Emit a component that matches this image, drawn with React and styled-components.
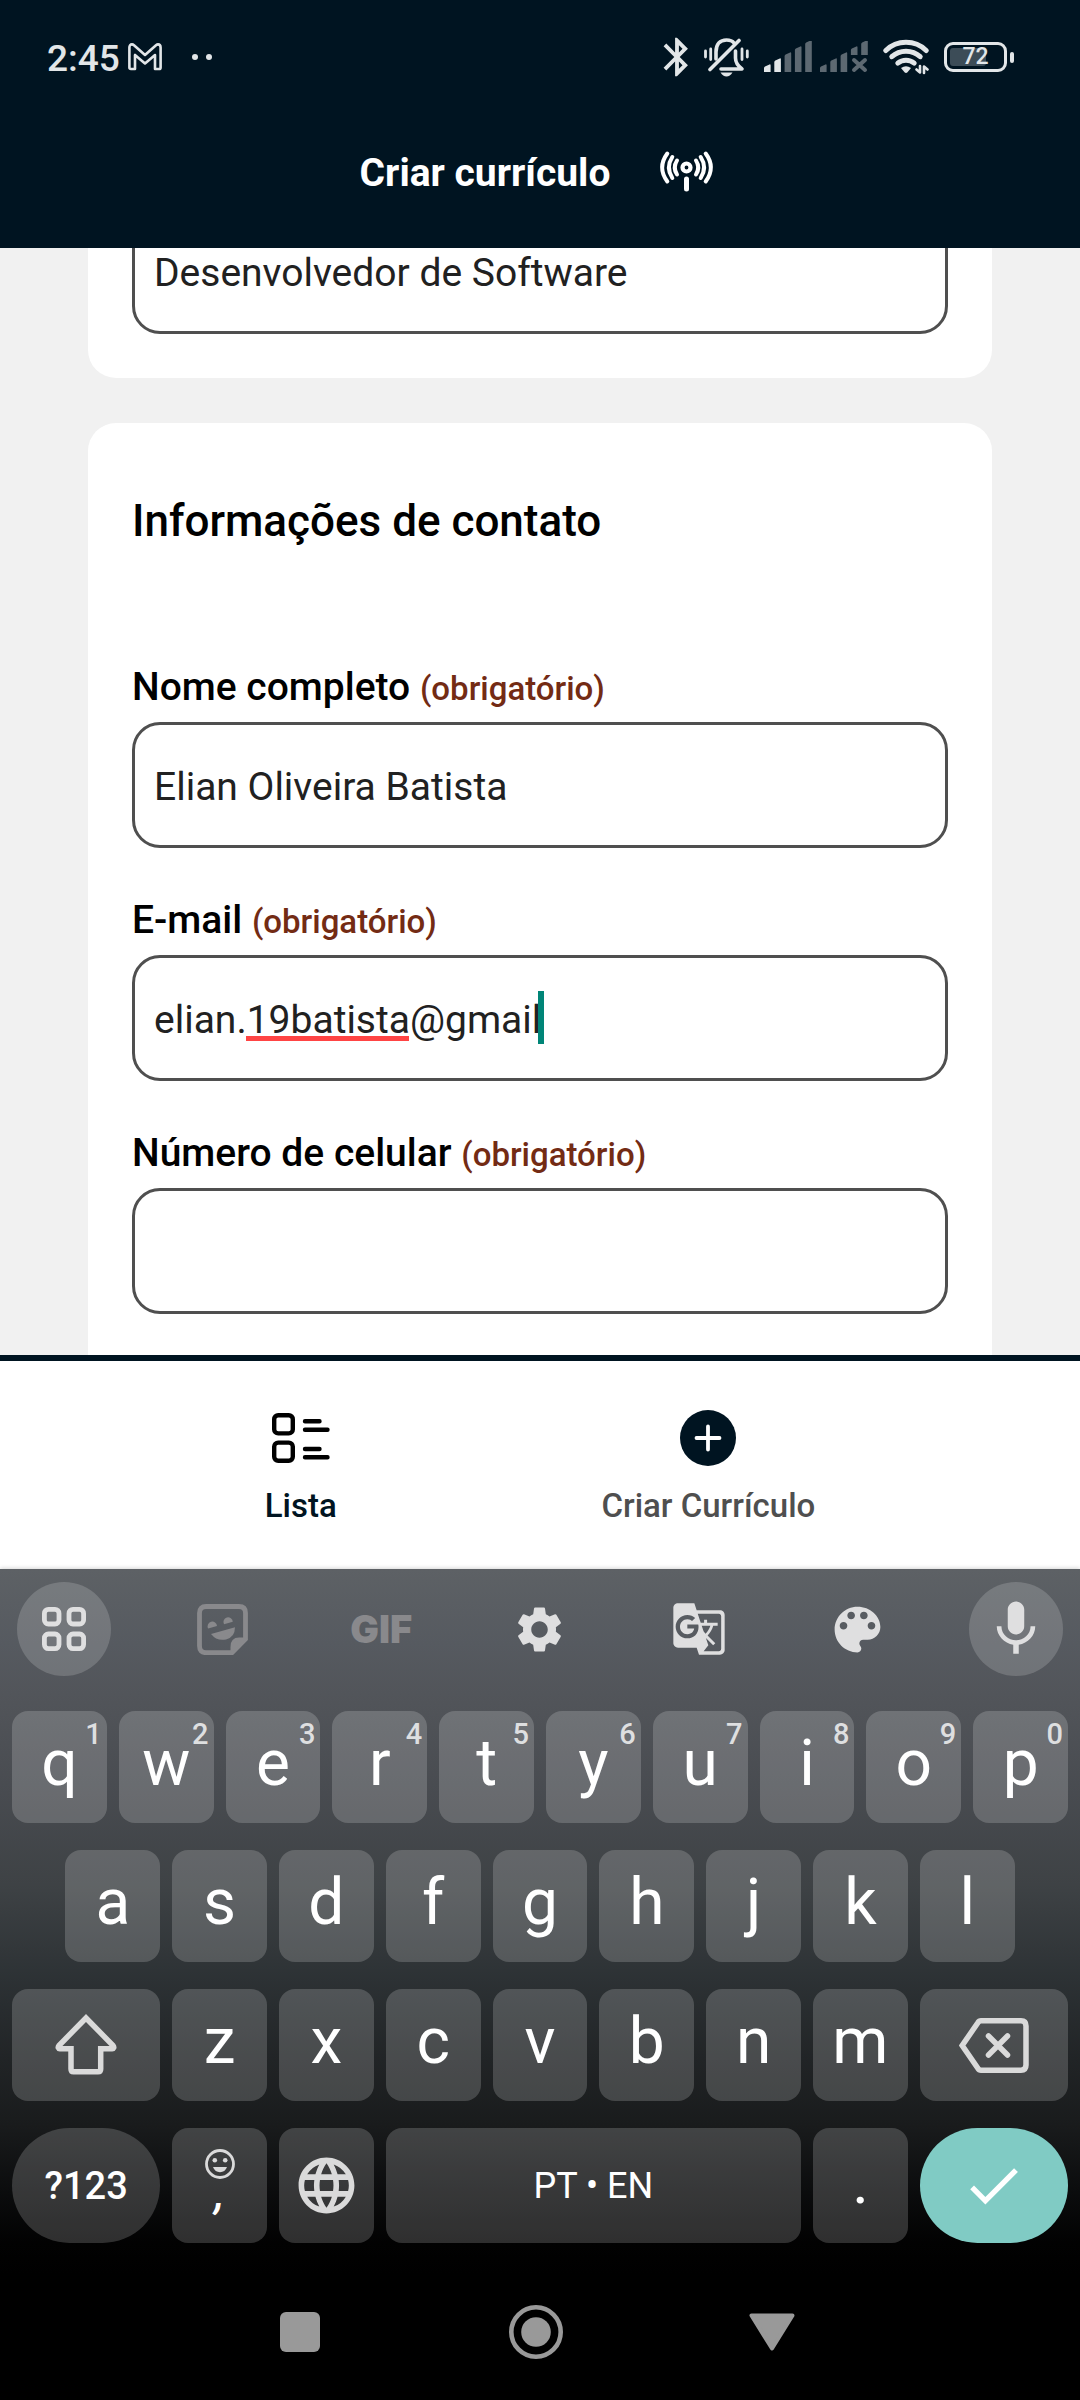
import React from 'react';
import styled, { createGlobalStyle } from 'styled-components';
import { MdSettings, MdGTranslate, MdLanguage, MdBluetooth, MdDone } from 'react-icons/md';

const GlobalStyle = createGlobalStyle`
  *, *::before, *::after { box-sizing: border-box; }
  html, body { margin: 0; padding: 0; }
  body { font-family: Roboto, "Liberation Sans", sans-serif; }
  button, input { font-family: inherit; margin: 0; }
  button { border: 0; padding: 0; background: none; color: inherit; cursor: pointer; }
  svg { display: block; flex: none; }
`;

const NAVY = '#001421';
const STATUS = '#e2e6e8';

const Screen = styled.div`
  display: flex;
  flex-direction: column;
  height: 100vh;
  background: #f1f1f1;
  overflow: hidden;
`;

const Top = styled.header`
  flex: none;
  background: ${NAVY};
`;

const StatusBar = styled.div`
  display: flex;
  align-items: center;
  justify-content: space-between;
  height: 96px;
  padding: 18px 66px 0 47px;
  color: ${STATUS};
`;

const StatusGroup = styled.div`
  display: flex;
  align-items: center;
  gap: ${(p) => p.$gap}px;
`;

const Clock = styled.span`
  padding-top: 4px;
  font-size: 37px;
  line-height: 44px;
  font-weight: 500;
`;

const Battery = styled.div`
  display: flex;
  align-items: center;
  gap: 3px;
`;

const BatteryBody = styled.div`
  position: relative;
  display: flex;
  align-items: center;
  justify-content: center;
  width: 63px;
  height: 30px;
  border: 3px solid ${STATUS};
  border-radius: 9px;
  font-size: 23px;
  line-height: 24px;
  font-weight: 500;
`;

const BatteryLevel = styled.div`
  position: absolute;
  top: 3px;
  bottom: 3px;
  left: 3px;
  border-radius: 3px;
  background: #3c4c57;
`;

const BatteryText = styled.span`
  position: relative;
`;

const BatteryTip = styled.div`
  width: 4px;
  height: 11px;
  border-radius: 2px;
  background: ${STATUS};
`;

const TitleBar = styled.div`
  display: flex;
  align-items: center;
  justify-content: center;
  gap: 44px;
  height: 152px;
  color: #fff;
`;

const Title = styled.h1`
  margin: 0;
  padding-top: 2px;
  font-size: 39px;
  line-height: 46px;
  font-weight: 700;
`;

const Content = styled.main`
  flex: 1;
  min-height: 0;
  overflow: hidden;
`;

const Form = styled.form`
  display: flex;
  flex-direction: column;
  gap: 45px;
  margin-top: -84px;
  padding: 0 88px;
`;

const Card = styled.section`
  padding: 44px 44px ${(p) => (p.$last ? 88 : 44)}px;
  border-radius: 28px;
  background: #fff;
`;

const Heading = styled.h2`
  margin: 28px 0 117px;
  font-size: 44px;
  line-height: 52px;
  font-weight: 500;
  color: #000;
`;

const Fields = styled.div`
  display: flex;
  flex-direction: column;
  gap: 49px;
`;

const FieldBox = styled.div`
  display: flex;
  flex-direction: column;
  gap: 12px;
`;

const Label = styled.label`
  font-size: 39px;
  line-height: 46px;
  font-weight: 500;
  color: #000;
`;

const Required = styled.span`
  font-size: 33px;
  line-height: 36px;
  color: #732b14;
`;

const InputWrap = styled.div`
  position: relative;
`;

const Input = styled.input`
  display: block;
  width: 100%;
  height: 126px;
  padding: 4px 19px 0;
  border: 3px solid #4f4f4f;
  border-radius: 28px;
  outline: none;
  background: #fff;
  color: #212121;
  font-size: 39px;
  line-height: 46px;
`;

const SpellMark = styled.span`
  position: absolute;
  top: 81px;
  left: 114px;
  width: 163px;
  height: 5px;
  background: #ff4444;
`;

const Caret = styled.span`
  position: absolute;
  top: 36px;
  left: 406px;
  width: 6px;
  height: 53px;
  background: #008577;
`;

const TabBar = styled.nav`
  flex: none;
  display: flex;
  justify-content: space-evenly;
  height: 214px;
  padding-top: 49px;
  border-top: 6px solid ${NAVY};
  background: #fff;
`;

const Tab = styled.button`
  display: flex;
  flex-direction: column;
  align-items: center;
  gap: 20px;
  height: 116px;
  font-size: 33px;
  line-height: 40px;
  font-weight: 500;
  color: ${(p) => (p.$active ? NAVY : '#4f4f4f')};
`;

const TabIcon = styled.span`
  display: flex;
  align-items: center;
  justify-content: center;
  height: 56px;
`;

const Bottom = styled.footer`
  flex: none;
  box-shadow: 0 -1px 4px rgba(0, 0, 0, 0.16);
  background: linear-gradient(
    #5d6165 0%, #565a60 9%, #52555a 15%, #484b50 27%, #3e4245 38%,
    #2d3235 49%, #212426 59%, #191b1c 67%, #0b0c0d 75%, #020202 81%, #000 85%
  );
`;

const Keyboard = styled.div`
  display: flex;
  flex-direction: column;
  gap: 27px;
  padding: 13px 12px 0;
`;

const Toolbar = styled.div`
  display: flex;
  justify-content: space-between;
  margin-bottom: 8px;
  padding: 0 5px;
`;

const Tool = styled.button`
  display: flex;
  align-items: center;
  justify-content: center;
  width: 94px;
  height: 94px;
  border-radius: 50%;
  background: ${(p) => (p.$round ? 'rgba(255, 255, 255, 0.17)' : 'none')};
  color: ${(p) => (p.$dim ? '#89898c' : '#dfdfe0')};
  font-family: Inter, Roboto, sans-serif;
  font-size: 38px;
  font-weight: 900;
`;

const Row = styled.div`
  display: grid;
  grid-template-columns: repeat(20, 1fr);
  column-gap: 12px;
`;

const Key = styled.button`
  position: relative;
  display: flex;
  flex-direction: column;
  align-items: center;
  justify-content: center;
  grid-column: ${(p) => (p.$start ? `${p.$start} / ` : '')} span ${(p) => p.$span || 2};
  min-width: 0;
  height: ${(p) => (p.$tall ? 115 : 112)}px;
  padding-bottom: ${(p) => p.$lift || 0}px;
  border-radius: ${(p) => (p.$pill ? 58 : 16)}px;
  background: ${(p) => (p.$accent ? '#80cbc4' : 'rgba(255, 255, 255, 0.18)')};
  color: ${(p) => (p.$icon ? '#dadada' : '#fff')};
  font-size: ${(p) => p.$size || 64}px;
  line-height: 1;
  font-weight: ${(p) => (p.$medium ? 500 : 400)};
`;

const Hint = styled.span`
  position: absolute;
  top: 7px;
  right: 5px;
  font-size: 29px;
  line-height: 32px;
  font-weight: 500;
  color: #dedfe0;
`;

const Comma = styled.span`
  font-size: 44px;
  line-height: 28px;
  font-weight: 500;
  font-style: italic;
`;

const SystemNav = styled.div`
  display: flex;
  justify-content: center;
  gap: 182px;
  height: 157px;
  padding: 62px 8px 0 0;
  color: #999;
`;

const SystemButton = styled.button`
  display: flex;
  align-items: center;
  justify-content: center;
  width: 54px;
  height: 54px;
`;

function GmailIcon() {
  return (
    <svg width="34" height="28" viewBox="0 0 34 28" fill="none" stroke="currentColor" strokeWidth="2.600" strokeLinejoin="round">
      <path d="M3 26 Q1.4 26 1.4 24.4 V4.6 Q1.4 1.4 4 1.4 Q5 1.4 6 2.2 L17 12 L28 2.2 Q29 1.4 30 1.4 Q32.6 1.4 32.6 4.6 V24.4 Q32.6 26 31 26 H27 V12 L17 20.5 L7 12 V26 Z" />
    </svg>
  );
}

function DotsIcon() {
  return (
    <svg width="20" height="8" viewBox="0 0 20 8" fill="currentColor">
      <circle cx="3" cy="4" r="3" />
      <circle cx="17" cy="4" r="3" />
    </svg>
  );
}

function BellOffIcon() {
  return (
    <svg width="45" height="39" viewBox="0 0 45 39" fill="none" stroke="currentColor" strokeWidth="3.600" strokeLinecap="round">
      <path d="M12 21 V14 C12 6 16 2 22.5 2 C26 2 28.500 3 30 5" />
      <path d="M31.500 13 V20 C31.500 24 34 28 38 31 H17" strokeLinejoin="round" />
      <path d="M6 31.500 L35 2.500" />
      <path d="M16.500 34.500 H28.500 Q26 38.500 22.500 38.500 Q19 38.500 16.500 34.500 Z" fill="currentColor" stroke="none" />
      <path d="M1.500 13 V19 M6.700 11 V21.500 M38 11 V21.500 M43.300 13 V19" strokeWidth="2.800" />
    </svg>
  );
}

function bar(i, bottom = 31) {
  const x = i * 10.3;
  const top = 24 - i * 6;
  return `M${x} ${bottom} V${top + 3} Q${x} ${top + 2} ${x + 1} ${top + 1.4} L${x + 5.5} ${top - 0.6} Q${x + 6.6} ${top - 1} ${x + 6.6} ${top + 0.6} V${bottom} Z`;
}

function SignalIcon() {
  return (
    <svg width="48" height="32" viewBox="0 0 48 32" fill="#5d6972">
      <path d={bar(0)} fill={STATUS} />
      <path d={bar(1)} fill={STATUS} />
      <path d={bar(2)} />
      <path d={bar(3)} />
      <path d={bar(4)} />
    </svg>
  );
}

function NoSignalIcon() {
  return (
    <svg width="48" height="32" viewBox="0 0 48 32" fill="#5d6972">
      <path d={bar(0)} />
      <path d={bar(1)} />
      <path d={bar(2)} />
      <path d={bar(3, 14)} />
      <path d={bar(4, 14)} />
      <path d="M34 19 L45 29 M45 19 L34 29" stroke="#5d6972" strokeWidth="4" strokeLinecap="round" />
    </svg>
  );
}

function WifiIcon() {
  return (
    <svg width="46" height="36" viewBox="0 0 46 36" fill="none" stroke="currentColor" strokeWidth="5" strokeLinecap="round">
      <path d="M2.800 11.500 A29 29 0 0 1 43.200 11.500" />
      <path d="M8.800 17.700 A21 21 0 0 1 37.200 17.700" />
      <path d="M14.800 24.200 A12.500 12.500 0 0 1 31.200 24.200" />
      <path d="M18 29 Q23 25.500 28 29 L24.500 33.300 Q23 34.600 21.500 33.300 Z" fill="currentColor" stroke="none" />
      <path d="M37 27 V33.500 L33.500 30.500 M41 34 V27.500 L44.500 30.500" strokeWidth="2.600" strokeLinejoin="round" />
    </svg>
  );
}

function AntennaIcon() {
  return (
    <svg width="66" height="54" viewBox="-6 -6 66 54" fill="none" stroke="currentColor" strokeWidth="4" strokeLinecap="round">
      <circle cx="26.500" cy="16.500" r="4" strokeWidth="4.200" />
      <path d="M26.500 28 V38" strokeWidth="5" />
      <path d="M17 9.500 Q12.500 16.500 17 23.500 M12.300 6 Q5.500 16.500 12.300 27 M7.300 2.500 Q-3 16.500 7.300 30.500" />
      <path d="M36 9.500 Q40.500 16.500 36 23.500 M40.700 6 Q47.500 16.500 40.700 27 M45.700 2.500 Q56 16.500 45.700 30.500" />
    </svg>
  );
}

function ListIcon() {
  return (
    <svg width="58" height="50" viewBox="0 0 58 50" fill="none" stroke="#000" strokeWidth="4.400">
      <rect x="2.200" y="2.200" width="18.600" height="18.200" rx="4" />
      <rect x="2.200" y="29.600" width="18.600" height="18.200" rx="4" />
      <path d="M33 8.300 H47.500 M33 16.700 H55.500 M33 36 H47.500 M33 44.300 H55.500" strokeLinecap="round" />
    </svg>
  );
}

function PlusIcon() {
  return (
    <svg width="56" height="56" viewBox="0 0 56 56">
      <circle cx="28" cy="28" r="28" fill={NAVY} />
      <path d="M28 16.500 V39.500 M16.500 28 H39.500" stroke="#fff" strokeWidth="3.800" strokeLinecap="round" />
    </svg>
  );
}

function AppsIcon() {
  return (
    <svg width="44" height="44" viewBox="0 0 44 44" fill="none" stroke="currentColor" strokeWidth="4.800">
      <rect x="2.400" y="2.400" width="14.600" height="14.600" rx="4" />
      <rect x="27" y="2.400" width="14.600" height="14.600" rx="4" />
      <rect x="2.400" y="27" width="14.600" height="14.600" rx="4" />
      <rect x="27" y="27" width="14.600" height="14.600" rx="4" />
    </svg>
  );
}

function StickerIcon() {
  return (
    <svg width="51" height="51" viewBox="0 0 51 51" fill="currentColor">
      <path d="M35 48.700 H9 Q2.500 48.700 2.500 42 V9 Q2.500 2.500 9 2.500 H42 Q48.500 2.500 48.500 9 V35 Z" fill="none" stroke="currentColor" strokeWidth="4.800" />
      <path d="M33.500 50 V43 Q33.500 33.500 42 33.500 H50 V36 L36 50 Z" />
      <path d="M11.200 24.500 A4.700 4.700 0 1 1 20 22 Z" />
      <path d="M27 20.300 A4.700 4.700 0 1 1 35.800 17.800 Z" />
      <path d="M14 30 L38 23.200 Q38 33 29 35.400 Q20 37.500 14 30 Z" />
    </svg>
  );
}

function PaletteIcon() {
  return (
    <svg width="61" height="61" viewBox="0 0 24 24" fill="currentColor">
      <path d="M12 3c-4.970 0-9 4.030-9 9s4.030 9 9 9c.830 0 1.500-.670 1.500-1.500 0-.390-.150-.740-.390-1.010-.230-.260-.380-.610-.380-.990 0-.830.670-1.500 1.500-1.500H16c2.760 0 5-2.240 5-5 0-4.420-4.030-8-9-8zm-5.500 9c-.830 0-1.500-.670-1.500-1.500S5.670 9 6.500 9 8 9.670 8 10.500 7.330 12 6.500 12zm3-4C8.670 8 8 7.330 8 6.500S8.670 5 9.500 5s1.500.670 1.500 1.500S10.330 8 9.500 8zm5 0c-.830 0-1.500-.670-1.500-1.500S13.670 5 14.500 5s1.500.670 1.500 1.500S15.330 8 14.500 8zm3 4c-.830 0-1.500-.670-1.500-1.500S16.670 9 17.500 9s1.500.670 1.500 1.500-.670 1.500-1.500 1.500z" />
    </svg>
  );
}

function MicIcon() {
  return (
    <svg width="66" height="66" viewBox="0 0 24 24" fill="currentColor">
      <path d="M12 14c1.660 0 2.990-1.340 2.990-3L15 5c0-1.660-1.340-3-3-3S9 3.340 9 5v6c0 1.660 1.340 3 3 3zm5.300-3c0 3-2.540 5.100-5.300 5.100S6.700 14 6.700 11H5c0 3.410 2.720 6.230 6 6.720V21h2v-3.280c3.280-.480 6-3.300 6-6.720h-1.700z" />
    </svg>
  );
}

function ShiftIcon() {
  return (
    <svg width="62" height="62" viewBox="0 0 62 62" fill="none" stroke="currentColor" strokeWidth="5.500" strokeLinejoin="miter">
      <path d="M31 4 L58 31.500 Q60 34.500 57 34.800 H45.700 V55 Q45.700 57.800 43 57.800 H18.500 Q16 57.800 16 55 V34.800 H5 Q2 34.500 4 31.500 Z" />
    </svg>
  );
}

function BackspaceIcon() {
  return (
    <svg width="70" height="55" viewBox="0 0 70 55" fill="none" stroke="currentColor" strokeWidth="5.500" strokeLinecap="round">
      <path d="M22 2.800 H62 Q67 2.800 67 8 V47 Q67 52.200 62 52.200 H22 Q20 52.200 19 50.500 L3.200 27.500 L19 4.500 Q20 2.800 22 2.800 Z" />
      <path d="M29.500 18 L48.500 37 M48.500 18 L29.500 37" />
    </svg>
  );
}

function SmileyIcon() {
  return (
    <svg width="30" height="30" viewBox="0 0 30 30" fill="#dadada">
      <circle cx="15" cy="15" r="13.500" fill="none" stroke="#dadada" strokeWidth="2.800" />
      <circle cx="9.800" cy="11.300" r="2.300" />
      <circle cx="20.200" cy="11.300" r="2.300" />
      <path d="M8 18 H22 Q20 23.200 15 23.200 Q10 23.200 8 18 Z" />
    </svg>
  );
}

function Field({ id, label, type = 'text', value, children }) {
  return (
    <FieldBox>
      <Label htmlFor={id}>
        {label} <Required>(obrigatório)</Required>
      </Label>
      <InputWrap>
        <Input id={id} type={type} defaultValue={value} required spellCheck={false} />
        {children}
      </InputWrap>
    </FieldBox>
  );
}

const DIGIT_ROW = ['q', 'w', 'e', 'r', 't', 'y', 'u', 'i', 'o', 'p'];
const HOME_ROW = ['a', 's', 'd', 'f', 'g', 'h', 'j', 'k', 'l'];
const LOW_ROW = ['z', 'x', 'c', 'v', 'b', 'n', 'm'];

export default function App() {
  return (
    <Screen>
      <GlobalStyle />
      <Top>
        <StatusBar>
          <StatusGroup $gap={30}>
            <StatusGroup $gap={8}>
              <Clock>2:45</Clock>
              <GmailIcon />
            </StatusGroup>
            <DotsIcon />
          </StatusGroup>
          <StatusGroup $gap={15}>
            <StatusGroup $gap={4}>
              <MdBluetooth size={46} />
              <BellOffIcon />
            </StatusGroup>
            <StatusGroup $gap={8}>
              <SignalIcon />
              <NoSignalIcon />
            </StatusGroup>
            <WifiIcon />
            <Battery>
              <BatteryBody>
                <BatteryLevel style={{ width: `${Math.round(72 * 0.88)}%` }} />
                <BatteryText>72</BatteryText>
              </BatteryBody>
              <BatteryTip />
            </Battery>
          </StatusGroup>
        </StatusBar>
        <TitleBar>
          <Title>Criar currículo</Title>
          <AntennaIcon />
        </TitleBar>
      </Top>

      <Content>
        <Form onSubmit={(e) => e.preventDefault()}>
          <Card>
            <Input aria-label="Cargo" type="text" defaultValue="Desenvolvedor de Software" />
          </Card>
          <Card $last>
            <Heading>Informações de contato</Heading>
            <Fields>
              <Field id="nome" label="Nome completo" value="Elian Oliveira Batista" />
              <Field id="email" label="E-mail" value="elian.19batista@gmail">
                <SpellMark />
                <Caret />
              </Field>
              <Field id="celular" label="Número de celular" type="tel" value="" />
            </Fields>
          </Card>
        </Form>
      </Content>

      <TabBar>
        <Tab type="button" $active>
          <TabIcon><ListIcon /></TabIcon>
          Lista
        </Tab>
        <Tab type="button">
          <TabIcon><PlusIcon /></TabIcon>
          Criar Currículo
        </Tab>
      </TabBar>

      <Bottom>
        <Keyboard>
          <Toolbar>
            <Tool type="button" $round aria-label="Menu"><AppsIcon /></Tool>
            <Tool type="button" $dim aria-label="Figurinhas"><StickerIcon /></Tool>
            <Tool type="button" $dim>GIF</Tool>
            <Tool type="button" aria-label="Configurações"><MdSettings size={55} /></Tool>
            <Tool type="button" aria-label="Traduzir"><MdGTranslate size={56} /></Tool>
            <Tool type="button" aria-label="Temas"><PaletteIcon /></Tool>
            <Tool type="button" $round aria-label="Ditado"><MicIcon /></Tool>
          </Toolbar>
          <Row>
            {DIGIT_ROW.map((k, i) => (
              <Key key={k} type="button" $lift={6}>
                {k}
                <Hint>{(i + 1) % 10}</Hint>
              </Key>
            ))}
          </Row>
          <Row>
            {HOME_ROW.map((k, i) => (
              <Key key={k} type="button" $lift={6} $start={i === 0 ? 2 : undefined}>{k}</Key>
            ))}
          </Row>
          <Row>
            <Key type="button" $span={3} $icon aria-label="Maiúsculas"><ShiftIcon /></Key>
            {LOW_ROW.map((k) => (
              <Key key={k} type="button" $lift={6}>{k}</Key>
            ))}
            <Key type="button" $span={3} $icon aria-label="Apagar"><BackspaceIcon /></Key>
          </Row>
          <Row>
            <Key type="button" $span={3} $tall $pill $medium $size={38}>?123</Key>
            <Key type="button" $tall $size={44} $lift={16}>
              <SmileyIcon />
              <Comma>,</Comma>
            </Key>
            <Key type="button" $tall $icon aria-label="Idioma"><MdLanguage size={67} /></Key>
            <Key type="button" $tall $span={8} $size={36}>PT • EN</Key>
            <Key type="button" $tall $medium $size={52}>.</Key>
            <Key type="button" $span={3} $tall $pill $accent aria-label="Concluir"><MdDone size={65} /></Key>
          </Row>
        </Keyboard>
        <SystemNav>
          <SystemButton type="button" aria-label="Recentes">
            <svg width="40" height="40" viewBox="0 0 40 40" fill="currentColor"><rect width="40" height="40" rx="6" /></svg>
          </SystemButton>
          <SystemButton type="button" aria-label="Início">
            <svg width="54" height="54" viewBox="0 0 54 54" fill="currentColor">
              <circle cx="27" cy="27" r="24.700" fill="none" stroke="currentColor" strokeWidth="4.600" />
              <circle cx="27" cy="27" r="14.800" />
            </svg>
          </SystemButton>
          <SystemButton type="button" aria-label="Voltar">
            <svg width="46" height="38" viewBox="0 0 46 38" fill="currentColor" stroke="currentColor" strokeWidth="4" strokeLinejoin="round">
              <path d="M2.500 2.500 H43.500 L23 35.500 Z" />
            </svg>
          </SystemButton>
        </SystemNav>
      </Bottom>
    </Screen>
  );
}
